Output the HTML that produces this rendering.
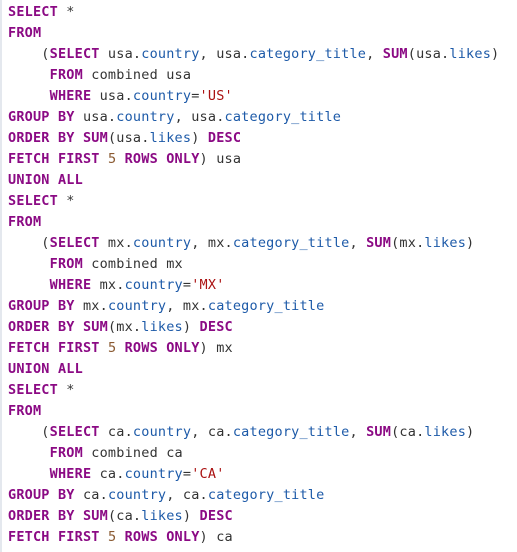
<!DOCTYPE html>
<html><head><style>
html,body{margin:0;padding:0;background:#fff;width:517px;height:552px;overflow:hidden}
.wrap{position:absolute;left:0;top:0;width:517px;height:552px;border-left:2px solid #e4e8ee;box-sizing:border-box}
pre{margin:0;padding:2px 0 0 6px;font-family:"DejaVu Sans Mono","Liberation Mono",monospace;font-size:13.5px;letter-spacing:0.2px;line-height:21px;color:#333}
.k{color:#8b0a84;font-weight:bold}
.p{color:#1d5aa8}
.s{color:#aa1111}
.n{color:#8a5a32}
</style></head><body><div class="wrap"><pre><span class="k">SELECT</span> *
<span class="k">FROM</span>
    (<span class="k">SELECT</span> usa.<span class="p">country</span>, usa.<span class="p">category_title</span>, <span class="k">SUM</span>(usa.<span class="p">likes</span>)
     <span class="k">FROM</span> combined usa
     <span class="k">WHERE</span> usa.<span class="p">country</span>=<span class="s">'US'</span>
<span class="k">GROUP BY</span> usa.<span class="p">country</span>, usa.<span class="p">category_title</span>
<span class="k">ORDER BY</span> <span class="k">SUM</span>(usa.<span class="p">likes</span>) <span class="k">DESC</span>
<span class="k">FETCH FIRST</span> <span class="n">5</span> <span class="k">ROWS ONLY</span>) usa
<span class="k">UNION ALL</span>
<span class="k">SELECT</span> *
<span class="k">FROM</span>
    (<span class="k">SELECT</span> mx.<span class="p">country</span>, mx.<span class="p">category_title</span>, <span class="k">SUM</span>(mx.<span class="p">likes</span>)
     <span class="k">FROM</span> combined mx
     <span class="k">WHERE</span> mx.<span class="p">country</span>=<span class="s">'MX'</span>
<span class="k">GROUP BY</span> mx.<span class="p">country</span>, mx.<span class="p">category_title</span>
<span class="k">ORDER BY</span> <span class="k">SUM</span>(mx.<span class="p">likes</span>) <span class="k">DESC</span>
<span class="k">FETCH FIRST</span> <span class="n">5</span> <span class="k">ROWS ONLY</span>) mx
<span class="k">UNION ALL</span>
<span class="k">SELECT</span> *
<span class="k">FROM</span>
    (<span class="k">SELECT</span> ca.<span class="p">country</span>, ca.<span class="p">category_title</span>, <span class="k">SUM</span>(ca.<span class="p">likes</span>)
     <span class="k">FROM</span> combined ca
     <span class="k">WHERE</span> ca.<span class="p">country</span>=<span class="s">'CA'</span>
<span class="k">GROUP BY</span> ca.<span class="p">country</span>, ca.<span class="p">category_title</span>
<span class="k">ORDER BY</span> <span class="k">SUM</span>(ca.<span class="p">likes</span>) <span class="k">DESC</span>
<span class="k">FETCH FIRST</span> <span class="n">5</span> <span class="k">ROWS ONLY</span>) ca</pre></div></body></html>
